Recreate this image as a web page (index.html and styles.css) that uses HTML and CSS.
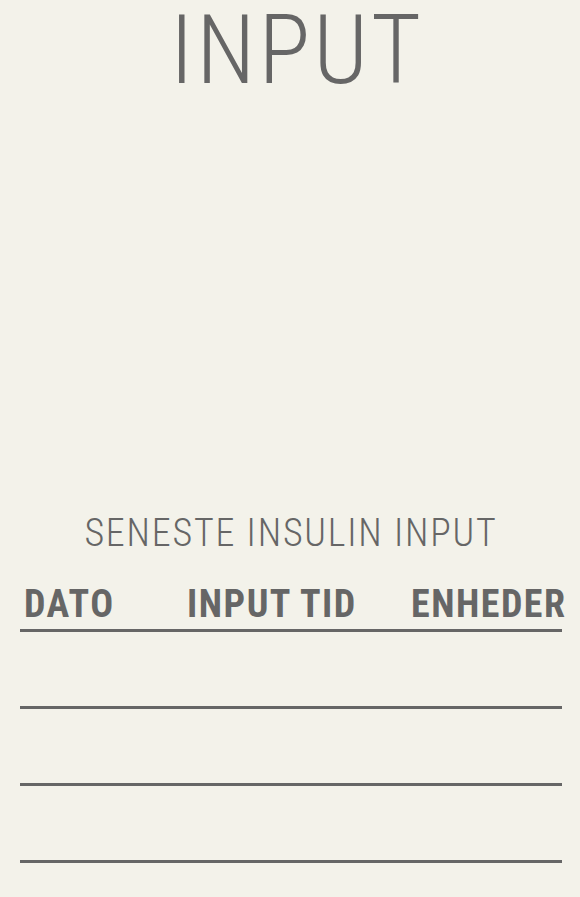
FILE: index.html
```html
<!DOCTYPE html>
<html>
<head>
<meta charset="utf-8">
<link rel="stylesheet" href="styles.css">
</head>
<body>
<main class="page">
  <h1 class="title">INPUT</h1>
  <div class="chart"></div>
  <h2 class="subtitle">SENESTE INSULIN INPUT</h2>
  <table class="log">
    <colgroup><col class="c-date"><col class="c-time"><col class="c-units"></colgroup>
    <thead>
      <tr><th>DATO</th><th>INPUT TID</th><th>ENHEDER</th></tr>
    </thead>
    <tbody>
      <tr><td></td><td></td><td></td></tr>
      <tr><td></td><td></td><td></td></tr>
      <tr><td></td><td></td><td></td></tr>
    </tbody>
  </table>
</main>
</body>
</html>
```
FILE: styles.css
```css
html, body {
  margin: 0;
  padding: 0;
  background: #f3f2ea;
}
body {
  font-family: "Roboto Condensed", Roboto, sans-serif;
  font-stretch: condensed;
  color: #666666;
}
.page {
  padding: 0 18px 0 20px;
}
.title {
  margin: 0;
  padding-left: 12px;
  text-align: center;
  font-size: 96px;
  font-weight: 300;
  letter-spacing: 3px;
  line-height: 100px;
}
.chart {
  height: 411px;
}
.subtitle {
  margin: 0;
  text-align: center;
  font-size: 38px;
  font-weight: 300;
  letter-spacing: 1.8px;
  line-height: 44px;
}
.log {
  width: 100%;
  table-layout: fixed;
  border-collapse: collapse;
  margin-top: 26px;
}
.c-date { width: 163px; }
.c-time { width: 224px; }
.log th {
  font-size: 38px;
  font-weight: 700;
  letter-spacing: 1.5px;
  text-align: left;
  white-space: nowrap;
  padding: 3px 0 5px 4px;
  border-bottom: 3px solid #666666;
  line-height: 40px;
}
.log td {
  height: 74px;
  padding: 0;
  border-bottom: 3px solid #666666;
}
```
